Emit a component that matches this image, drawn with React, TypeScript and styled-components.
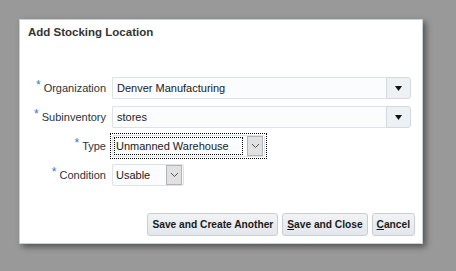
import React from "react";
import styled, { createGlobalStyle } from "styled-components";

const GlobalStyle = createGlobalStyle`
  html, body {
    margin: 0;
    padding: 0;
    background: #999999;
    font-family: "Liberation Sans", Arial, sans-serif;
  }
`;

const Page = styled.div`
  width: 456px;
  height: 271px;
  padding: 19px 0 0 19px;
  box-sizing: border-box;
`;

const Dialog = styled.div`
  width: 404px;
  height: 225px;
  box-sizing: border-box;
  background: #ffffff;
  border: 1px solid #c9d1d8;
  box-shadow: 3px 3px 6px rgba(0, 0, 0, 0.45);
  display: flex;
  flex-direction: column;
`;

const Title = styled.div`
  font-size: 11.5px;
  font-weight: bold;
  color: #333333;
  padding: 6px 0 0 8px;
  height: 57px;
  box-sizing: border-box;
`;

const Form = styled.div`
  display: grid;
  grid-template-columns: 86px 1fr;
  column-gap: 6px;
  row-gap: 7px;
  padding-right: 11px;
  align-items: center;
`;

const Label = styled.label`
  justify-self: end;
  font-size: 11px;
  color: #2a333c;
  white-space: nowrap;
`;

const Star = styled.span`
  color: #2f7bc6;
  font-size: 12px;
  position: relative;
  top: -3px;
  margin-right: 3px;
`;

const Combo = styled.div`
  display: flex;
  height: 22px;
  box-sizing: border-box;
`;

const ComboField = styled.div`
  flex: 1;
  display: flex;
  align-items: center;
  padding-left: 4px;
  font-size: 11px;
  color: #1a1a1a;
  background: #fbfcfd;
  border: 1px solid #dde2e7;
  border-right: none;
  border-radius: 2px 0 0 2px;
`;

const ComboButton = styled.div`
  width: 23px;
  display: flex;
  align-items: center;
  justify-content: center;
  background: #eef1f4;
  border: 1px solid #d3d9df;
  border-radius: 0 3px 3px 0;
`;

const Focus = styled.div<{ $focused?: boolean }>`
  justify-self: start;
  display: flex;
  padding: ${(p) => (p.$focused ? "1px" : "0")};
  margin: ${(p) => (p.$focused ? "-1px 0 -1px -1px" : "0")};
  outline: ${(p) => (p.$focused ? "1px dotted #000" : "none")};
`;

const Select = styled.div<{ $width: number }>`
  width: ${(p) => p.$width}px;
  height: 22px;
  box-sizing: border-box;
  display: flex;
  background: #fbfcfd;
  border: 1px solid #dde2e7;
  border-radius: 2px;
`;

const SelectText = styled.div<{ $focused?: boolean }>`
  flex: 1;
  display: flex;
  align-items: center;
  padding-left: 3px;
  font-size: 11px;
  color: #1a1a1a;
  outline: ${(p) => (p.$focused ? "1px dotted #000" : "none")};
  outline-offset: -2px;
`;

const SelectButton = styled.div`
  width: 16px;
  margin: 0 1px 0 3px;
  display: flex;
  align-items: center;
  justify-content: center;
  background: #e1e1e1;
  border: 1px solid #b4b4b4;
  box-sizing: border-box;
`;

const Footer = styled.div`
  margin-top: auto;
  display: flex;
  justify-content: flex-end;
  gap: 4px;
  padding: 0 7px 7px 0;
`;

const Button = styled.button`
  height: 23px;
  padding: 0 4px;
  font-family: "Liberation Sans", Arial, sans-serif;
  font-size: 10.2px;
  font-weight: bold;
  color: #1a1a1a;
  background: linear-gradient(#f1f3f5, #e3e7eb);
  border: 1px solid #c6ced6;
  border-radius: 3px;
  u {
    text-decoration: underline;
  }
`;

const Chevron = () => (
  <svg width="9" height="6" viewBox="0 0 9 6">
    <path d="M1 1 L4.5 4.5 L8 1" fill="none" stroke="#555" strokeWidth="1" />
  </svg>
);

const Triangle = () => (
  <svg width="7" height="5" viewBox="0 0 7 5">
    <path d="M0 0 H7 L3.5 5 Z" fill="#111" />
  </svg>
);

const Field = ({ label }: { label: string }) => (
  <Label>
    <Star>*</Star>
    {label}
  </Label>
);

export default function App() {
  return (
    <>
      <GlobalStyle />
      <Page>
        <Dialog>
          <Title>Add Stocking Location</Title>
          <Form>
            <Field label="Organization" />
            <Combo>
              <ComboField>Denver Manufacturing</ComboField>
              <ComboButton>
                <Triangle />
              </ComboButton>
            </Combo>
            <Field label="Subinventory" />
            <Combo>
              <ComboField>stores</ComboField>
              <ComboButton>
                <Triangle />
              </ComboButton>
            </Combo>
            <Field label="Type" />
            <Focus $focused>
              <Select $width={153}>
                <SelectText $focused>Unmanned Warehouse</SelectText>
                <SelectButton>
                  <Chevron />
                </SelectButton>
              </Select>
            </Focus>
            <Field label="Condition" />
            <Focus>
              <Select $width={72}>
                <SelectText>Usable</SelectText>
                <SelectButton>
                  <Chevron />
                </SelectButton>
              </Select>
            </Focus>
          </Form>
          <Footer>
            <Button>Save and Create Another</Button>
            <Button>
              <u>S</u>ave and Close
            </Button>
            <Button>
              <u>C</u>ancel
            </Button>
          </Footer>
        </Dialog>
      </Page>
    </>
  );
}
